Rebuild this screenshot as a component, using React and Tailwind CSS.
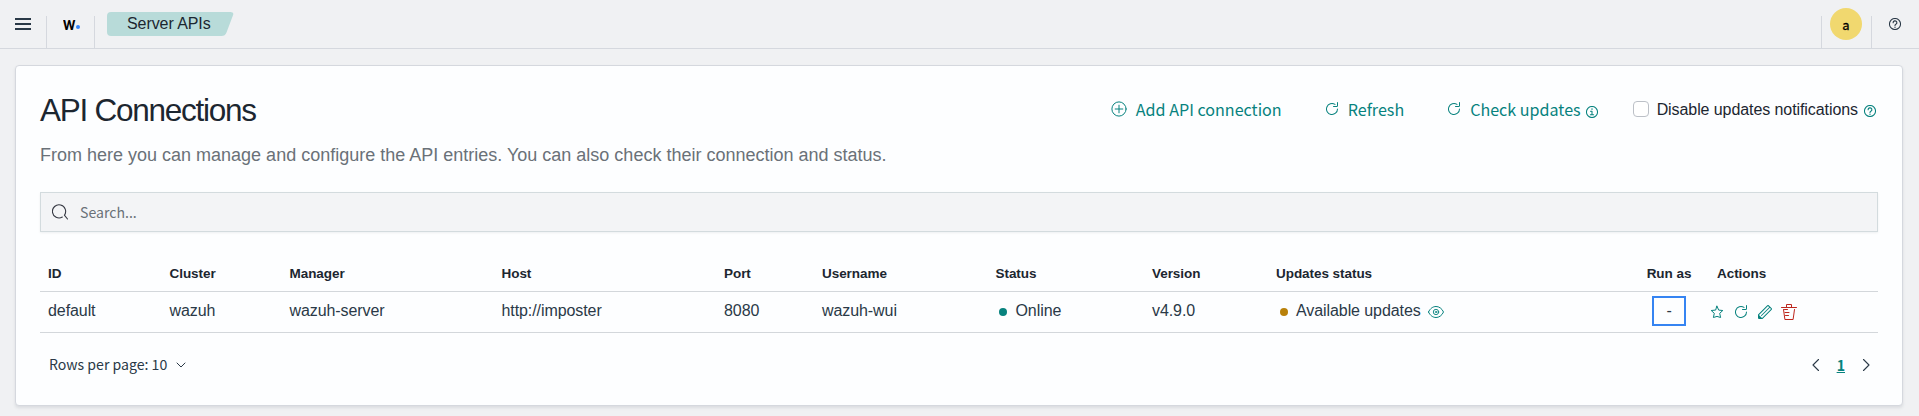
import React from "react";

const sans = "font-['Liberation_Sans',sans-serif]";
const ui = "font-['Noto_Sans_CJK_JP',sans-serif]";

function Svg({ size = 16, className = "", children }) {
  return (
    <svg
      width={size}
      height={size}
      viewBox="0 0 16 16"
      fill="none"
      stroke="currentColor"
      strokeLinecap="round"
      strokeLinejoin="round"
      className={"shrink-0 " + className}
    >
      {children}
    </svg>
  );
}

const RefreshIcon = ({ className }) => (
  <Svg className={className}>
    <path
      stroke="none"
      fill="currentColor"
      d="M11.228 2.942a.5.5 0 1 1-.538.842A5 5 0 1 0 13 8a.5.5 0 1 1 1 0 6 6 0 1 1-2.772-5.058zM14 1.5v3A1.5 1.5 0 0 1 12.5 6h-3a.5.5 0 0 1 0-1h3a.5.5 0 0 0 .5-.5v-3a.5.5 0 1 1 1 0z"
    />
  </Svg>
);

const HelpIcon = ({ className }) => (
  <Svg size={12} className={className}>
    <circle cx="8" cy="8" r="7.4" strokeWidth="1.4" />
    <path d="M5.500 6.300a2.500 2.400 0 1 1 3.700 2C8.300 8.800 8 9.200 8 10" strokeWidth="1.5" />
    <path d="M8 12.200v.2" strokeWidth="1.7" />
  </Svg>
);

const InfoIcon = ({ className }) => (
  <Svg size={12} className={className}>
    <circle cx="8" cy="8" r="7.4" strokeWidth="1.4" />
    <path d="M6 7h2v4.6M5.8 11.7h4.4" strokeWidth="1.4" />
    <path d="M8 4v.2" strokeWidth="1.8" />
  </Svg>
);

const columns = ["ID", "Cluster", "Manager", "Host", "Port", "Username", "Status", "Version", "Updates status"];
const grid = "grid grid-cols-[121.5px_120px_212px_222.5px_98px_173.5px_156.5px_124px_361px_80px_1fr] items-center border-b border-[#d3d7db]";

function Header() {
  return (
    <header className="flex h-[49px] items-start border-b border-[#d5d8de] text-[#0a121a]">
      <div className="flex h-12 w-[46px] items-center pl-[15px] text-[#2a3947]">
        <Svg>
          <path d="M0 3h16M0 8h16M0 13h16" strokeWidth="2" strokeLinecap="butt" />
        </Svg>
      </div>
      <div className="mt-4 h-8 w-px bg-[#d5d8de]" />
      <div className="flex h-12 w-[47px] items-start pt-[11px] pl-4 text-black">
        <span className="inline-block w-[13px] font-['Lato',sans-serif] text-[19px] leading-6 font-black">
          <span className="inline-block origin-left scale-x-[0.8]">w</span>
        </span>
        <span className="mt-[14px] size-[3.500px] rounded-full bg-[#3585f9]" />
      </div>
      <div className="mt-4 h-8 w-px bg-[#d5d8de]" />
      <div className="relative mt-3 ml-3 h-6 w-[127px]">
        <svg className="absolute inset-0" width="127" height="24">
          <path d="M4 0H123.500Q127.300 0 126 3.200L119.500 20.500Q118.200 24 114.500 24H4Q0 24 0 20V4Q0 0 4 0Z" fill="#b8dbd9" />
        </svg>
        <span className="relative block pl-5 text-[16px] leading-[23px] tracking-[-0.08px] text-[#1c2630]">Server APIs</span>
      </div>
      <div className="ml-auto flex">
        <div className="mt-4 h-8 w-px bg-[#d5d8de]" />
        <div className="mt-2 ml-2 flex size-8 items-center justify-center rounded-full bg-[#f1d86f]">
          <span className={ui + " text-[13px] leading-none text-black [-webkit-text-stroke:0.3px_black]"}>a</span>
        </div>
        <div className="mt-4 ml-[9px] h-8 w-px bg-[#d5d8de]" />
        <div className="flex h-12 items-center pr-[18px] pl-[17px] text-[#2a3947]">
          <HelpIcon />
        </div>
      </div>
    </header>
  );
}

function Toolbar() {
  return (
    <div className={"flex h-6 items-center text-[16.100px] leading-6 text-[#07827e] " + ui}>
      <button className="flex items-center">
        <Svg>
          <circle cx="8" cy="8" r="7.1" strokeWidth="1" />
          <path d="M8 4.200v7.600M4.200 8h7.600" strokeWidth="1" />
        </Svg>
        <span className="ml-[8.500px]">Add API connection</span>
      </button>
      <button className="ml-[42px] flex items-center">
        <RefreshIcon />
        <span className="ml-2">Refresh</span>
      </button>
      <button className="ml-[42px] flex items-center">
        <RefreshIcon />
        <span className="ml-2">Check updates</span>
        <InfoIcon className="mt-[5px] ml-[5px]" />
      </button>
      <label className={"ml-[35px] flex items-center text-[16px] tracking-[-0.08px] text-[#1c2630] " + sans}>
        <span className="size-4 rounded-[4px] border border-[#bcc0c7] bg-white" />
        <span className="ml-2 pt-px">Disable updates notifications</span>
        <HelpIcon className="mt-[3px] ml-[6px] text-[#07827e]" />
      </label>
    </div>
  );
}

export default function App() {
  return (
    <div className={"h-[416px] w-full overflow-hidden bg-[#f0f1f3] " + sans}>
      <Header />
      <main className="mx-[15px] mt-4 mr-4 h-[341px] rounded-[4px] border border-[#d5d8de] bg-[#fdfeff] px-6 pt-6 shadow-[0_2px_3px_rgba(100,110,120,0.15)]">
        <div className="flex items-start justify-between pr-[2px]">
          <h1 className="text-[31.500px] leading-10 tracking-[-1.260px] text-[#1c2630]">API Connections</h1>
          <div className="pt-[7px]">
            <Toolbar />
          </div>
        </div>
        <p className="mt-3 text-[18px] leading-[26px] text-[#6a7178]">
          From here you can manage and configure the API entries. You can also check their connection and status.
        </p>
        <div className="mt-6 flex h-10 items-center border border-[#d3dbde] bg-[#f3f4f6] pl-[11px] text-[#343741] shadow-[0_1px_2px_rgba(100,110,120,0.1)]">
          <Svg>
            <path d="M10.300 13.100A6.600 6.600 0 1 1 12.400 11.200L15.500 15" strokeWidth="1.100" />
          </Svg>
          <span className={"ml-3 text-[14.100px] leading-6 text-[#6a7178] " + ui}>Search...</span>
        </div>
        <div className="mt-[19px] text-[#2a3947]">
          <div className={grid + " h-[41px] text-[13.500px] font-bold tracking-[-0.05px] text-[#1c2630]"}>
            {columns.map((c) => (
              <div key={c} className="pt-[7px] pl-2">{c}</div>
            ))}
            <div className="pt-[7px] text-center">Run as</div>
            <div className="pt-[7px] pl-2">Actions</div>
          </div>
          <div className={grid + " h-[41px] text-[16px] leading-6 tracking-[-0.08px]"}>
            {["default", "wazuh", "wazuh-server", "http://imposter", "8080", "wazuh-wui"].map((c) => (
              <div key={c} className="pb-[2px] pl-2">{c}</div>
            ))}
            <div className="flex items-center pb-[2px] pl-[11px]">
              <span className="mt-px size-2 rounded-full bg-[#07827e]" />
              <span className="ml-[9px]">Online</span>
            </div>
            <div className="pb-[2px] pl-2">v4.9.0</div>
            <div className="flex items-center pb-[2px] pl-3">
              <span className="mt-px size-2 rounded-full bg-[#b9810a]" />
              <span className="ml-2">Available updates</span>
              <Svg className="mt-[2px] ml-[7px] text-[#07827e]">
                <path d="M.5 8C2.200 4.300 5 2.500 8 2.500S13.800 4.300 15.500 8C13.800 11.700 11 13.500 8 13.500S2.200 11.700.5 8Z" strokeWidth="1" />
                <circle cx="8" cy="8" r="2.700" strokeWidth="0.9" />
                <circle cx="8" cy="8" r="0.800" strokeWidth="0.8" />
              </Svg>
            </div>
            <div className="flex justify-center">
              <span className="mb-[2px] flex h-[30px] w-[34px] items-center justify-center border-2 border-[#3584f2]">-</span>
            </div>
            <div className="flex items-center gap-2 text-[#07827e]">
              <Svg>
                <path d="M8 2.200l1.700 3.900 4.100.4-3.100 2.800.9 4.200L8 12.400l-3.600 1.100.9-4.200L2.200 6.500l4.100-.4z" strokeWidth="1" />
              </Svg>
              <RefreshIcon />
              <Svg>
                <path
                  stroke="none"
                  fill="currentColor"
                  d="M12.148 3.148 11 2l-9 9v3h3l9-9-1.144-1.144-8.002 7.998a.502.502 0 0 1-.708 0 .502.502 0 0 1 0-.708l8.002-7.998zM11 1c.256 0 .512.098.707.293l3 3a.999.999 0 0 1 0 1.414l-9 9A.997.997 0 0 1 5 15H2a1 1 0 0 1-1-1v-3c0-.265.105-.52.293-.707l9-9A.997.997 0 0 1 11 1zM5 14H2v-3l3 3z"
                />
              </Svg>
              <Svg className="text-[#bd271e]">
                <path d="M.5 3.500h15M5.500 3.500v-3h5v3M2.500 5.500l1.400 10h8.200l1.400-10M4 8.500h4M4.500 11.500h3M3.500 5.500h3" strokeWidth="1" />
              </Svg>
            </div>
          </div>
        </div>
        <div className={"mt-[19px] flex h-6 items-center text-[#2a3947] " + ui}>
          <span className="ml-[9px] text-[14.100px] leading-6">Rows per page: 10</span>
          <Svg className="mt-px ml-[6px]">
            <path d="M4 6l4 4 4-4" strokeWidth="1" />
          </Svg>
          <div className="ml-auto flex items-center pt-px pr-[4px]">
            <Svg>
              <path d="M10.500 2.500L5 8l5.500 5.500" strokeWidth="1.100" />
            </Svg>
            <span className="mx-[13px] text-[14.200px] leading-6 font-bold text-[#07827e] underline">1</span>
            <Svg>
              <path d="M5.500 2.500L11 8l-5.500 5.500" strokeWidth="1.100" />
            </Svg>
          </div>
        </div>
      </main>
    </div>
  );
}
